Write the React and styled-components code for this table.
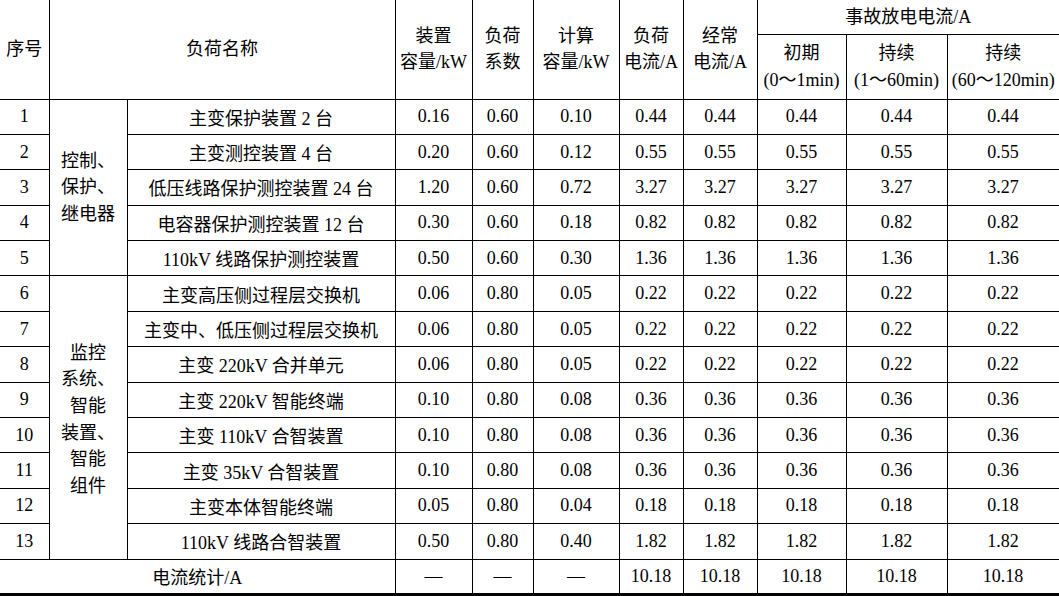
import React from "react";
import styled, { createGlobalStyle } from "styled-components";

const GlobalStyle = createGlobalStyle`
  html, body {
    margin: 0;
    padding: 0;
    background: #fff;
    overflow: hidden;
  }
  body {
    font-family: "Liberation Serif", "Noto Sans CJK SC", serif;
    color: #000;
  }
`;

const Table = styled.table`
  width: 1059px;
  table-layout: fixed;
  border-collapse: collapse;
  font-size: 18px;
  border-bottom: 3px solid #000;
`;

const HeadCell = styled.th`
  font-weight: normal;
  text-align: center;
  vertical-align: middle;
  padding: 0;
  line-height: 26px;
  border: 1px solid #000;
  border-top: none;
  white-space: nowrap;
  &:first-child {
    border-left: none;
  }
  &:last-child {
    border-right: none;
  }
`;

const SubHead = styled(HeadCell)`
  border-top: 1px solid #000;
  line-height: 27px;
`;

const Row = styled.tr`
  height: ${(p) => p.$h || 35.4}px;
`;

const Cell = styled.td`
  text-align: center;
  vertical-align: middle;
  padding: 0;
  border: 1px solid #000;
  white-space: nowrap;
  &:first-child {
    border-left: none;
  }
  &:last-child {
    border-right: none;
  }
`;

const GroupCell = styled(Cell)`
  line-height: 26.6px;
  white-space: normal;
  padding-top: ${(p) => p.$shift || 0}px;
`;

const widths = [49, 78, 268, 77, 61, 86, 64, 74, 89, 101, 112];

const rows = [
  ["1", "主变保护装置 2 台", "0.16", "0.60", "0.10", "0.44"],
  ["2", "主变测控装置 4 台", "0.20", "0.60", "0.12", "0.55"],
  ["3", "低压线路保护测控装置 24 台", "1.20", "0.60", "0.72", "3.27"],
  ["4", "电容器保护测控装置 12 台", "0.30", "0.60", "0.18", "0.82"],
  ["5", "110kV 线路保护测控装置", "0.50", "0.60", "0.30", "1.36"],
  ["6", "主变高压侧过程层交换机", "0.06", "0.80", "0.05", "0.22"],
  ["7", "主变中、低压侧过程层交换机", "0.06", "0.80", "0.05", "0.22"],
  ["8", "主变 220kV 合并单元", "0.06", "0.80", "0.05", "0.22"],
  ["9", "主变 220kV 智能终端", "0.10", "0.80", "0.08", "0.36"],
  ["10", "主变 110kV 合智装置", "0.10", "0.80", "0.08", "0.36"],
  ["11", "主变 35kV 合智装置", "0.10", "0.80", "0.08", "0.36"],
  ["12", "主变本体智能终端", "0.05", "0.80", "0.04", "0.18"],
  ["13", "110kV 线路合智装置", "0.50", "0.80", "0.40", "1.82"],
];

const groups = {
  0: { span: 5, lines: ["控制、", "保护、", "继电器"] },
  5: { span: 8, lines: ["监控", "系统、", "智能", "装置、", "智能", "组件"], shift: 4 },
};

export default function App() {
  return (
    <>
      <GlobalStyle />
      <Table>
        <colgroup>
          {widths.map((w, i) => (
            <col key={i} style={{ width: w }} />
          ))}
        </colgroup>
        <thead>
          <Row $h={34}>
            <HeadCell rowSpan={2}>序号</HeadCell>
            <HeadCell rowSpan={2} colSpan={2}>
              负荷名称
            </HeadCell>
            <HeadCell rowSpan={2}>
              装置
              <br />
              容量/kW
            </HeadCell>
            <HeadCell rowSpan={2}>
              负荷
              <br />
              系数
            </HeadCell>
            <HeadCell rowSpan={2}>
              计算
              <br />
              容量/kW
            </HeadCell>
            <HeadCell rowSpan={2}>
              负荷
              <br />
              电流/A
            </HeadCell>
            <HeadCell rowSpan={2}>
              经常
              <br />
              电流/A
            </HeadCell>
            <HeadCell colSpan={3}>事故放电电流/A</HeadCell>
          </Row>
          <Row $h={65}>
            <SubHead>
              初期
              <br />
              (0～1min)
            </SubHead>
            <SubHead>
              持续
              <br />
              (1～60min)
            </SubHead>
            <SubHead>
              持续
              <br />
              (60～120min)
            </SubHead>
          </Row>
        </thead>
        <tbody>
          {rows.map((r, i) => {
            const g = groups[i];
            return (
              <Row key={r[0]}>
                <Cell>{r[0]}</Cell>
                {g && (
                  <GroupCell rowSpan={g.span} $shift={g.shift}>
                    {g.lines.map((l, k) => (
                      <div key={k}>{l}</div>
                    ))}
                  </GroupCell>
                )}
                <Cell>{r[1]}</Cell>
                <Cell>{r[2]}</Cell>
                <Cell>{r[3]}</Cell>
                <Cell>{r[4]}</Cell>
                {[0, 1, 2, 3, 4, 5].map((k) => (
                  <Cell key={k}>{r[5]}</Cell>
                ))}
              </Row>
            );
          })}
          <Row $h={35}>
            <Cell colSpan={3}>电流统计/A</Cell>
            <Cell>—</Cell>
            <Cell>—</Cell>
            <Cell>—</Cell>
            {[0, 1, 2, 3, 4, 5].map((k) => (
              <Cell key={k}>10.18</Cell>
            ))}
          </Row>
        </tbody>
      </Table>
    </>
  );
}
